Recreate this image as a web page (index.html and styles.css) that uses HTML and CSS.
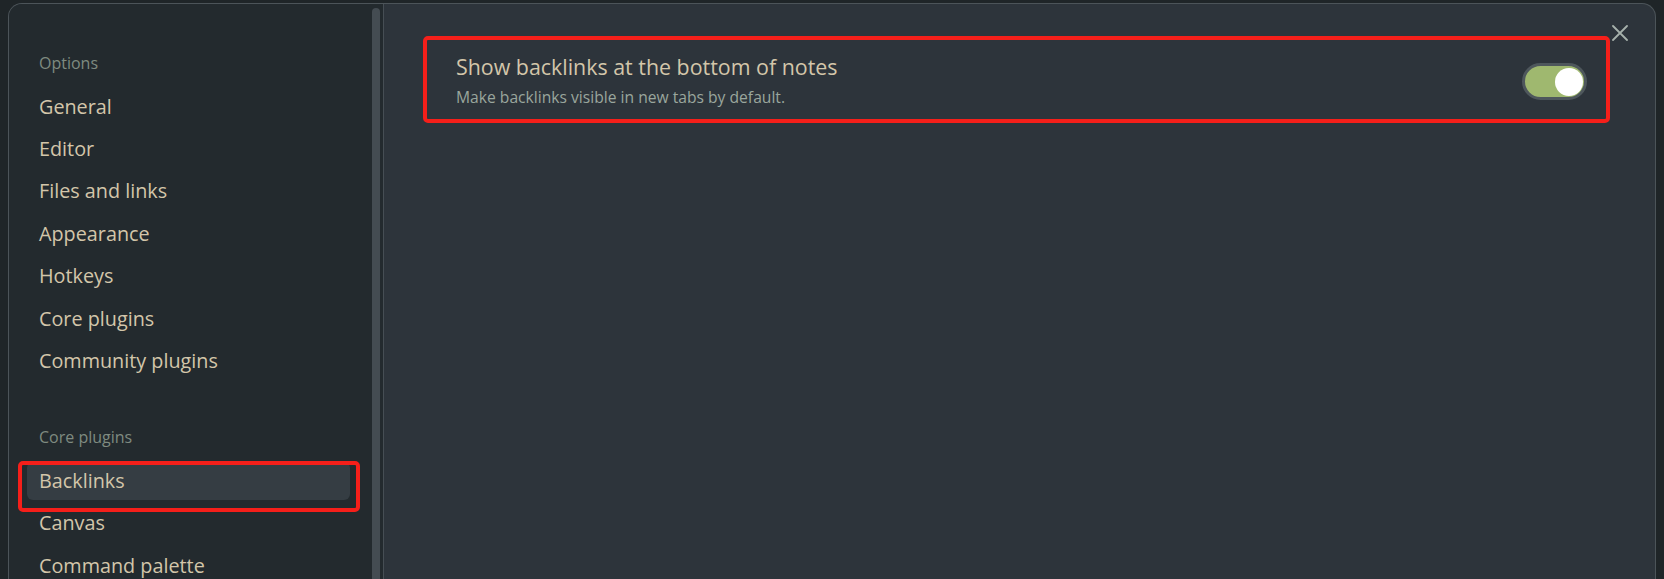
FILE: index.html
```html
<!DOCTYPE html>
<html lang="en">
<head>
<meta charset="utf-8">
<title>Settings</title>
<link rel="stylesheet" href="styles.css">
</head>
<body>
<div class="modal">
  <aside class="sidebar">
    <nav class="nav">
      <section class="group">
        <div class="group-title">Options</div>
        <div class="item">General</div>
        <div class="item">Editor</div>
        <div class="item">Files and links</div>
        <div class="item">Appearance</div>
        <div class="item">Hotkeys</div>
        <div class="item">Core plugins</div>
        <div class="item">Community plugins</div>
      </section>
      <section class="group group-core">
        <div class="group-title">Core plugins</div>
        <div class="item active">Backlinks<span class="mark"></span></div>
        <div class="item">Canvas</div>
        <div class="item">Command palette</div>
      </section>
    </nav>
    <div class="scrollbar"><div class="thumb"></div></div>
  </aside>
  <main class="content">
    <div class="setting">
      <div class="info">
        <div class="name">Show backlinks at the bottom of notes</div>
        <div class="desc">Make backlinks visible in new tabs by default.</div>
      </div>
      <div class="toggle"><div class="knob"></div></div>
    </div>
  </main>
  <button class="close" aria-label="Close">
    <svg width="16" height="16" viewBox="0 0 16 16"><path d="M1 1 L15 15 M15 1 L1 15" stroke="currentColor" stroke-width="1.8" stroke-linecap="round" fill="none"/></svg>
  </button>
</div>
</body>
</html>
```

FILE: styles.css
```css
html, body {
  margin: 0;
  padding: 0;
  height: 100%;
  overflow: hidden;
  background: #1f2528;
  font-family: "Open Sans", "Noto Sans", sans-serif;
}

.modal {
  position: relative;
  display: flex;
  margin: 3px 8px 0;
  height: 600px;
  border: 1px solid #4c5459;
  border-bottom: none;
  border-radius: 14px 14px 0 0;
  overflow: hidden;
  background: #2d343b;
}

.sidebar {
  display: flex;
  width: 374px;
  flex: 0 0 374px;
  background: #232a2e;
  border-right: 1px solid #464e54;
}

.nav {
  flex: 1;
  padding: 46.6px 18px 0;
}

.group-core {
  margin-top: 44.8px;
}

.group-title {
  height: 24px;
  line-height: 24px;
  margin-bottom: 13px;
  padding-left: 12px;
  font-size: 16px;
  color: #7f8a80;
}

.item {
  position: relative;
  height: 38px;
  line-height: 38px;
  margin-bottom: 4.4px;
  padding-left: 12px;
  font-size: 19.8px;
  color: #d3c6aa;
  border-radius: 6px;
}

.item.active {
  background: #353d43;
}

.mark {
  position: absolute;
  top: -1px;
  left: -9px;
  right: -10px;
  bottom: -12px;
  border: 4px solid #f51f1a;
  border-radius: 5px;
}

.scrollbar {
  width: 8px;
  padding: 4px 3px 0 4px;
}

.thumb {
  height: 100%;
  background: #444c52;
  border-radius: 4px;
}

.content {
  flex: 1;
  padding: 32px 45px 0 39px;
}

.setting {
  display: flex;
  align-items: center;
  justify-content: space-between;
  box-sizing: content-box;
  height: 78px;
  padding: 1px 19px 0 29px;
  border: 4px solid #f51f1a;
  border-radius: 5px;
}

.toggle {
  margin-top: 3px;
}

.name {
  font-size: 21.4px;
  line-height: 28px;
  color: #d3c6aa;
}

.desc {
  margin-top: 5px;
  font-size: 15.65px;
  line-height: 22px;
  color: #9aa69d;
}

.toggle {
  display: flex;
  align-items: center;
  justify-content: flex-end;
  box-sizing: content-box;
  width: 58px;
  height: 31px;
  padding-right: 1px;
  border: 3px solid #4e575c;
  border-radius: 20px;
  background: #9fb86f;
}

.knob {
  width: 28px;
  height: 28px;
  border-radius: 50%;
  background: #ffffff;
}

.close {
  position: absolute;
  top: 21px;
  right: 27px;
  width: 16px;
  height: 16px;
  padding: 0;
  border: none;
  background: transparent;
  color: #a6b1ab;
  display: flex;
}
```
